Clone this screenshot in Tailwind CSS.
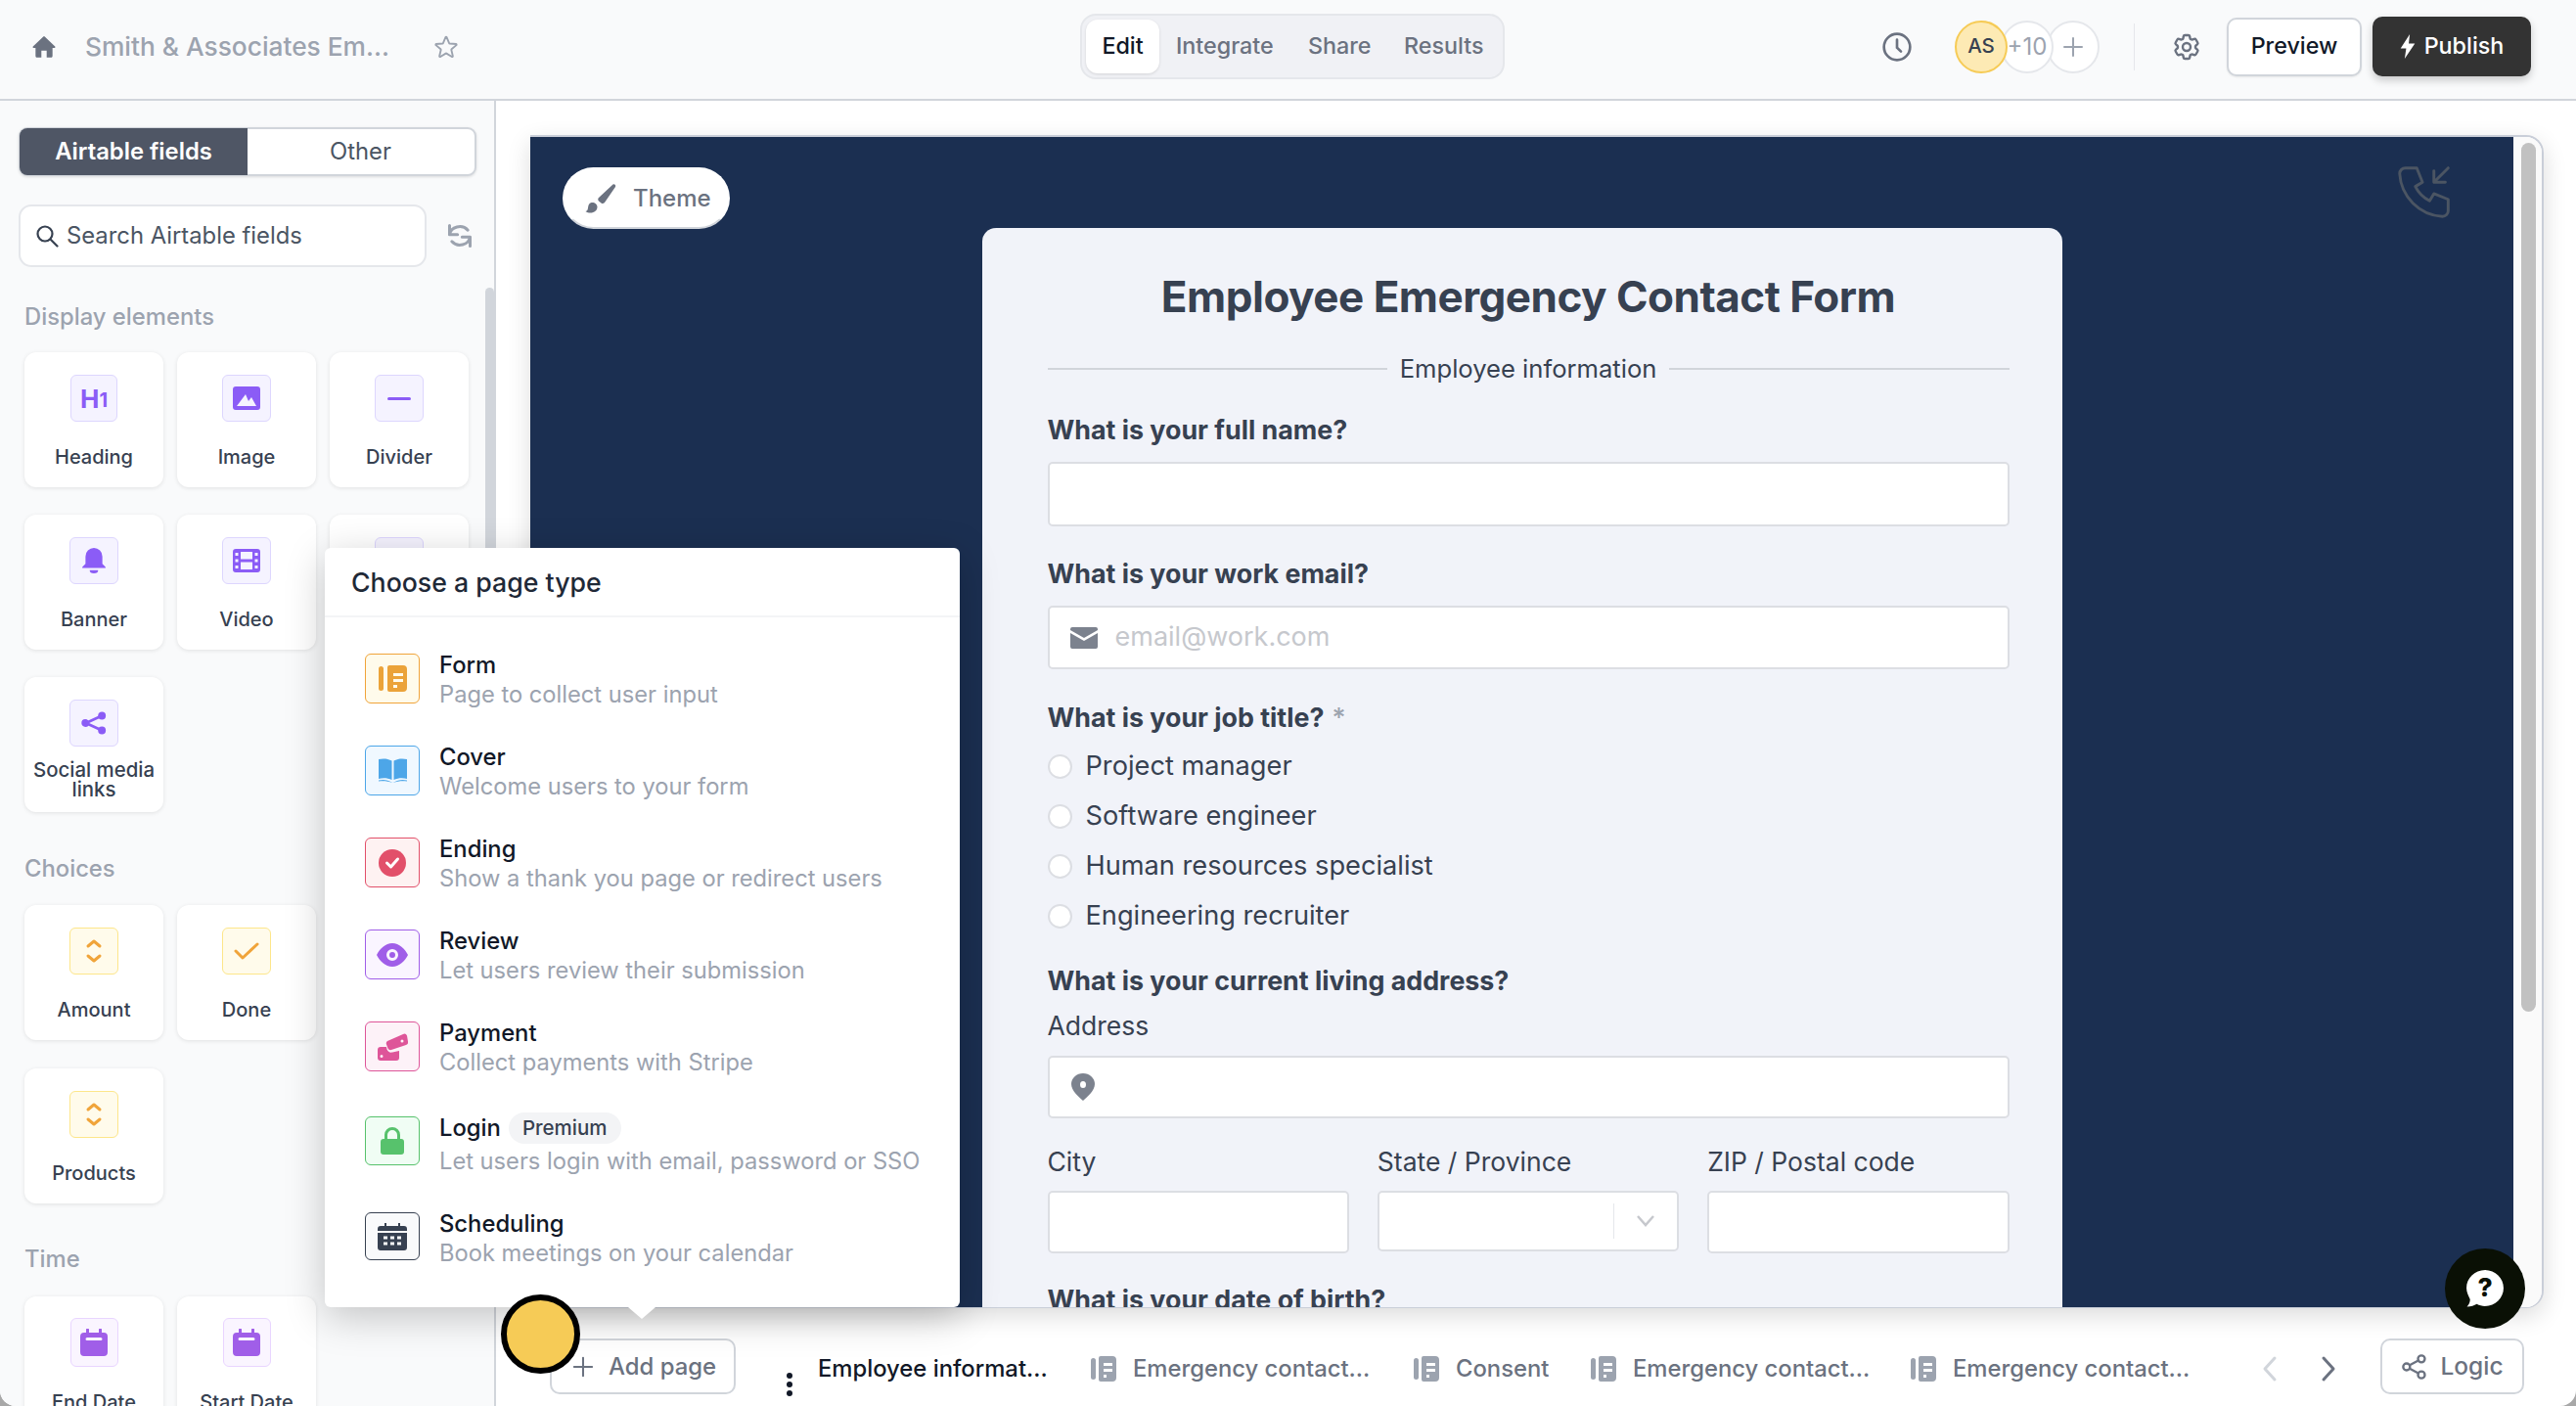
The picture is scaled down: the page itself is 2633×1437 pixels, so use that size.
<!DOCTYPE html>
<html lang="en">
<head>
  <meta charset="UTF-8" />
  <title>Form editor</title>
  <script src="https://cdn.jsdelivr.net/npm/@tailwindcss/browser@4"></script>
</head>
<body class="bg-[#a8a8a8] [font-family:Inter,sans-serif] overflow-hidden">
<div class="relative w-[2633px] h-[1437px] bg-white rounded-b-[16px] overflow-hidden flex flex-col">

  <!-- top bar -->
  <header class="h-[103px] shrink-0 bg-[#f9fafb] border-b-2 border-[#d1d5db] flex items-center pb-[6px]">
    <svg class="w-[26px] h-[26px] ml-[32px]" viewBox="0 0 24 24" fill="#6b7280"><path d="M12.7 2.3a1 1 0 0 0-1.4 0L1.6 11.6c-.5.5-.2 1.4.6 1.4H4v7.5c0 .8.7 1.5 1.5 1.5H9.500v-6.500h5V22h4c.8 0 1.500-.7 1.500-1.500V13h1.800c.8 0 1.100-.9.600-1.400z"/></svg>
    <span class="ml-[29px] w-[310px] text-[26.300px] font-medium text-[#9ca3af] whitespace-nowrap">Smith &amp; Associates Em...</span>
    <svg class="w-[28px] h-[28px] ml-[45px]" viewBox="0 0 24 24" fill="none" stroke="#9ca3af" stroke-width="1.600"><path stroke-linejoin="round" d="M11.480 3.499a.562.562 0 0 1 1.040 0l2.125 5.111a.563.563 0 0 0 .475.345l5.518.442c.499.04.701.663.321.988l-4.204 3.602a.563.563 0 0 0-.182.557l1.285 5.385a.562.562 0 0 1-.84.61l-4.725-2.885a.562.562 0 0 0-.586 0L6.982 20.540a.562.562 0 0 1-.84-.61l1.285-5.386a.562.562 0 0 0-.182-.557l-4.204-3.602a.562.562 0 0 1 .321-.988l5.518-.442a.563.563 0 0 0 .475-.345L11.480 3.500Z"/></svg>

    <div class="ml-[634px] w-[434px] h-[67px] bg-[#f0f1f5] border-2 border-[#e5e7eb] rounded-[16px] flex items-center pl-[4px] text-[23.300px] font-medium text-[#6b7280]">
      <span class="w-[75px] h-[55px] bg-white rounded-[12px] shadow-[0_1px_3px_rgba(0,0,0,.12)] flex items-center justify-center text-[#111827]">Edit</span>
      <span class="ml-[17px] w-[101px] whitespace-nowrap">Integrate</span>
      <span class="ml-[34px] w-[65px]">Share</span>
      <span class="ml-[33px] w-[82px]">Results</span>
    </div>

    <svg class="w-[32px] h-[32px] ml-[385px]" viewBox="0 0 24 24" fill="none" stroke="#6b7280" stroke-width="2" stroke-linecap="round"><circle cx="12" cy="12" r="10"/><path d="M12 6.500v6l3 3"/></svg>
    <div class="ml-[43px] flex items-center">
      <span class="relative z-30 w-[54px] h-[54px] rounded-full bg-[#fdeab4] border-2 border-[#f6cb56] flex items-center justify-center text-[20.500px] font-medium text-[#374151]">AS</span>
      <span class="relative z-20 -ml-[7px] w-[54px] h-[54px] rounded-full bg-white border-2 border-[#e5e7eb] flex items-center justify-center text-[24px] text-[#9ca3af]">+10</span>
      <span class="relative z-10 -ml-[7px] w-[54px] h-[54px] rounded-full bg-white border-2 border-[#e5e7eb] flex items-center justify-center">
        <svg class="w-[24px] h-[24px]" viewBox="0 0 24 24" fill="none" stroke="#9ca3af" stroke-width="2" stroke-linecap="round"><path d="M12 3v18M3 12h18"/></svg>
      </span>
    </div>
    <span class="ml-[35px] w-px h-[48px] bg-[#e5e7eb]"></span>
    <svg class="w-[32px] h-[32px] ml-[37px]" viewBox="0 0 24 24" fill="none" stroke="#6b7280" stroke-width="1.800"><path stroke-linejoin="round" d="M9.594 3.940c.09-.542.56-.94 1.110-.94h2.593c.55 0 1.020.398 1.110.94l.213 1.281c.063.374.313.686.645.87.074.04.147.083.22.127.325.196.72.257 1.075.124l1.217-.456a1.125 1.125 0 0 1 1.370.49l1.296 2.247a1.125 1.125 0 0 1-.26 1.431l-1.003.827c-.293.241-.438.613-.43.992a7.723 7.723 0 0 1 0 .255c-.008.378.137.75.43.991l1.004.827c.424.35.534.955.26 1.430l-1.298 2.247a1.125 1.125 0 0 1-1.369.491l-1.217-.456c-.355-.133-.75-.072-1.076.124a6.470 6.470 0 0 1-.22.128c-.331.183-.581.495-.644.869l-.213 1.281c-.09.543-.56.94-1.110.94h-2.594c-.55 0-1.019-.398-1.110-.94l-.213-1.281c-.062-.374-.312-.686-.644-.87a6.520 6.520 0 0 1-.22-.127c-.325-.196-.72-.257-1.076-.124l-1.217.456a1.125 1.125 0 0 1-1.369-.49l-1.297-2.247a1.125 1.125 0 0 1 .26-1.431l1.004-.827c.292-.24.437-.613.43-.991a6.932 6.932 0 0 1 0-.255c.007-.38-.138-.751-.43-.992l-1.004-.827a1.125 1.125 0 0 1-.26-1.430l1.297-2.247a1.125 1.125 0 0 1 1.370-.491l1.216.456c.356.133.751.072 1.076-.124.072-.044.146-.086.22-.128.332-.183.582-.495.644-.869l.214-1.280Z"/><circle cx="12" cy="12" r="3"/></svg>
    <button class="ml-[25px] w-[138px] h-[60px] bg-white border-2 border-[#d1d5db] rounded-[10px] shadow-[0_1px_2px_rgba(0,0,0,.08)] text-[23.300px] font-medium text-[#111827]">Preview</button>
    <button class="ml-[11px] w-[162px] h-[61px] bg-[#333333] rounded-[10px] shadow-[0_4px_8px_rgba(0,0,0,.2)] flex items-center justify-center gap-[9px] text-[23.300px] font-medium text-white">
      <svg class="w-[16px] h-[25px]" viewBox="0 0 14 24" fill="white"><path d="M9 0 0 14h5.500L4 24l10-15H8z"/></svg>Publish
    </button>
  </header>

  <div class="flex-1 flex min-h-0">
    <!-- fields sidebar -->
    <aside class="relative w-[507px] shrink-0 bg-[#f9fafb] border-r-2 border-[#d1d5db] overflow-hidden pt-[27px]">
      <div class="ml-[19px] w-[468px] h-[50px] flex border-2 border-[#d1d5db] rounded-[9px] bg-white shadow-[0_1px_3px_rgba(0,0,0,.12)] text-[23.800px]">
        <span class="w-[233px] -m-[1px] bg-[#4f5665] rounded-l-[8px] font-semibold text-white flex items-center justify-center">Airtable fields</span>
        <span class="flex-1 text-[#4b5563] flex items-center justify-center">Other</span>
      </div>
      <div class="mt-[29px] flex items-center">
        <div class="ml-[19px] w-[417px] h-[64px] bg-white border-2 border-[#e5e7eb] rounded-[13px] flex items-center pl-[15px] gap-[8px] text-[23.800px] text-[#4b5563]">
          <svg class="w-[24px] h-[24px]" viewBox="0 0 24 24" fill="none" stroke="#374151" stroke-width="2.200" stroke-linecap="round"><circle cx="10" cy="10" r="7.500"/><path d="m16 16 6.500 6.500"/></svg>
          Search Airtable fields
        </div>
        <svg class="w-[28px] h-[30px] ml-[20px]" viewBox="0 0 24 24" fill="none" stroke="#9ca3af" stroke-width="2.600" stroke-linecap="round" stroke-linejoin="round"><path d="M3 11a9 8 0 0 1 16-4M3 3v8h7M21 13a9 8 0 0 1-16 4M21 21v-8h-7"/></svg>
      </div>

      <h3 class="mt-[36px] ml-[25px] h-[30px] flex items-center text-[23.800px] font-medium text-[#9ca3af]">Display elements</h3>
      <div class="mt-[21px] ml-[25px] w-[454px] grid grid-cols-3 gap-x-[14px] gap-y-[28px]">
        <div class="h-[138px] bg-white rounded-[12px] shadow-[0_1px_4px_rgba(0,0,0,.1)] flex flex-col items-center pt-[23px]">
          <span class="w-[48px] h-[48px] rounded-[6px] bg-[#f5f3ff] border border-[#ddd6fe] flex items-center justify-center text-[26px] font-bold text-[#8b5cf6]">H<span class="text-[20px] mt-[3px]">1</span></span>
          <span class="mt-[21px] text-[20px] font-medium text-[#374151]">Heading</span>
        </div>
        <div class="h-[138px] bg-white rounded-[12px] shadow-[0_1px_4px_rgba(0,0,0,.1)] flex flex-col items-center pt-[23px]">
          <span class="w-[50px] h-[48px] rounded-[6px] bg-[#f5f3ff] border border-[#ddd6fe] flex items-center justify-center">
            <svg class="w-[28px] h-[24px]" viewBox="0 0 28 24" fill="#8b5cf6"><path d="M3 0h22a3 3 0 0 1 3 3v18a3 3 0 0 1-3 3H3a3 3 0 0 1-3-3V3a3 3 0 0 1 3-3zm1 20h20l-5-9-3 4-3-7z" fill-rule="evenodd"/></svg>
          </span>
          <span class="mt-[21px] text-[20px] font-medium text-[#374151]">Image</span>
        </div>
        <div class="h-[138px] bg-white rounded-[12px] shadow-[0_1px_4px_rgba(0,0,0,.1)] flex flex-col items-center pt-[23px]">
          <span class="w-[50px] h-[48px] rounded-[6px] bg-[#f5f3ff] border border-[#ddd6fe] flex items-center justify-center">
            <span class="w-[24px] h-[3px] rounded-full bg-[#8b5cf6]"></span>
          </span>
          <span class="mt-[21px] text-[20px] font-medium text-[#374151]">Divider</span>
        </div>
        <div class="h-[138px] bg-white rounded-[12px] shadow-[0_1px_4px_rgba(0,0,0,.1)] flex flex-col items-center pt-[23px]">
          <span class="w-[50px] h-[48px] rounded-[6px] bg-[#f5f3ff] border border-[#ddd6fe] flex items-center justify-center">
            <svg class="w-[26px] h-[28px]" viewBox="0 0 24 26" fill="#8b5cf6"><path d="M12 1a8 8 0 0 0-8 8v7l-3 3v1h22v-1l-3-3V9a8 8 0 0 0-8-8zM8 22h8a4 3 0 0 1-8 0z"/></svg>
          </span>
          <span class="mt-[21px] text-[20px] font-medium text-[#374151]">Banner</span>
        </div>
        <div class="h-[138px] bg-white rounded-[12px] shadow-[0_1px_4px_rgba(0,0,0,.1)] flex flex-col items-center pt-[23px]">
          <span class="w-[50px] h-[48px] rounded-[6px] bg-[#f5f3ff] border border-[#ddd6fe] flex items-center justify-center">
            <svg class="w-[28px] h-[24px]" viewBox="0 0 28 24" fill="#8b5cf6"><path fill-rule="evenodd" d="M3 0h22a3 3 0 0 1 3 3v18a3 3 0 0 1-3 3H3a3 3 0 0 1-3-3V3a3 3 0 0 1 3-3zm5 3v7.500h12V3zm0 10.500V21h12v-7.500zM2.500 4v3h3V4zm0 6.500v3h3v-3zm0 6.500v3h3v-3zm20-13v3h3V4zm0 6.500v3h3v-3zm0 6.500v3h3v-3z"/></svg>
          </span>
          <span class="mt-[21px] text-[20px] font-medium text-[#374151]">Video</span>
        </div>
        <div class="h-[138px] bg-white rounded-[12px] shadow-[0_1px_4px_rgba(0,0,0,.1)] flex flex-col items-center pt-[23px]">
          <span class="w-[50px] h-[48px] rounded-[6px] bg-[#f5f3ff] border border-[#ddd6fe]"></span>
        </div>
        <div class="h-[138px] bg-white rounded-[12px] shadow-[0_1px_4px_rgba(0,0,0,.1)] flex flex-col items-center pt-[23px]">
          <span class="w-[50px] h-[48px] rounded-[6px] bg-[#f5f3ff] border border-[#ddd6fe] flex items-center justify-center">
            <svg class="w-[28px] h-[28px]" viewBox="0 0 24 24" fill="#8b5cf6" stroke="#8b5cf6" stroke-width="2.400"><circle cx="4.500" cy="12" r="2.200"/><circle cx="19" cy="5.500" r="2.200"/><circle cx="19" cy="18.500" r="2.200"/><path d="m5 12 14-6.500M5 12l14 6.500" fill="none"/></svg>
          </span>
          <span class="mt-[14px] text-[20.400px] leading-[20px] font-medium text-[#374151] text-center">Social media<br>links</span>
        </div>
      </div>

      <h3 class="mt-[43px] ml-[25px] h-[30px] flex items-center text-[23.800px] font-medium text-[#9ca3af]">Choices</h3>
      <div class="mt-[22px] ml-[25px] w-[454px] grid grid-cols-3 gap-x-[14px] gap-y-[29px]">
        <div class="h-[138px] bg-white rounded-[12px] shadow-[0_1px_4px_rgba(0,0,0,.1)] flex flex-col items-center pt-[23px]">
          <span class="w-[50px] h-[48px] rounded-[6px] bg-[#fffbeb] border border-[#fde68a] flex items-center justify-center">
            <svg class="w-[18px] h-[28px]" viewBox="0 0 18 28" fill="none" stroke="#f0a43a" stroke-width="3" stroke-linecap="round" stroke-linejoin="round"><path d="m3 9 6-5 6 5M3 19l6 5 6-5"/></svg>
          </span>
          <span class="mt-[21px] text-[20px] font-medium text-[#374151]">Amount</span>
        </div>
        <div class="h-[138px] bg-white rounded-[12px] shadow-[0_1px_4px_rgba(0,0,0,.1)] flex flex-col items-center pt-[23px]">
          <span class="w-[50px] h-[48px] rounded-[6px] bg-[#fffbeb] border border-[#fde68a] flex items-center justify-center">
            <svg class="w-[26px] h-[20px]" viewBox="0 0 26 20" fill="none" stroke="#f0a43a" stroke-width="3" stroke-linecap="round" stroke-linejoin="round"><path d="m2 10 7 7L24 3"/></svg>
          </span>
          <span class="mt-[21px] text-[20px] font-medium text-[#374151]">Done</span>
        </div>
        <div></div>
        <div class="h-[138px] bg-white rounded-[12px] shadow-[0_1px_4px_rgba(0,0,0,.1)] flex flex-col items-center pt-[23px]">
          <span class="w-[50px] h-[48px] rounded-[6px] bg-[#fffbeb] border border-[#fde68a] flex items-center justify-center">
            <svg class="w-[18px] h-[28px]" viewBox="0 0 18 28" fill="none" stroke="#f0a43a" stroke-width="3" stroke-linecap="round" stroke-linejoin="round"><path d="m3 9 6-5 6 5M3 19l6 5 6-5"/></svg>
          </span>
          <span class="mt-[21px] text-[20px] font-medium text-[#374151]">Products</span>
        </div>
      </div>

      <h3 class="mt-[42px] ml-[25px] h-[30px] flex items-center text-[23.800px] font-medium text-[#9ca3af]">Time</h3>
      <div class="mt-[23px] ml-[25px] w-[454px] grid grid-cols-3 gap-x-[14px]">
        <div class="h-[138px] bg-white rounded-[12px] shadow-[0_1px_4px_rgba(0,0,0,.1)] flex flex-col items-center pt-[22px]">
          <span class="w-[49px] h-[50px] rounded-[6px] bg-[#faf5ff] border border-[#e9d5ff] flex items-center justify-center">
            <svg class="w-[28px] h-[28px]" viewBox="0 0 28 28" fill="#a05ee8"><path fill-rule="evenodd" d="M6 1a1.500 1.500 0 0 1 3 0v3h10V1a1.500 1.500 0 0 1 3 0v3h2a4 4 0 0 1 4 4v16a4 4 0 0 1-4 4H4a4 4 0 0 1-4-4V8a4 4 0 0 1 4-4h2zm1 8a1.500 1.500 0 0 0 0 3h14a1.500 1.500 0 0 0 0-3z"/></svg>
          </span>
          <span class="mt-[21px] text-[20px] font-medium text-[#374151]">End Date</span>
        </div>
        <div class="h-[138px] bg-white rounded-[12px] shadow-[0_1px_4px_rgba(0,0,0,.1)] flex flex-col items-center pt-[22px]">
          <span class="w-[49px] h-[50px] rounded-[6px] bg-[#faf5ff] border border-[#e9d5ff] flex items-center justify-center">
            <svg class="w-[28px] h-[28px]" viewBox="0 0 28 28" fill="#a05ee8"><path fill-rule="evenodd" d="M6 1a1.500 1.500 0 0 1 3 0v3h10V1a1.500 1.500 0 0 1 3 0v3h2a4 4 0 0 1 4 4v16a4 4 0 0 1-4 4H4a4 4 0 0 1-4-4V8a4 4 0 0 1 4-4h2zm1 8a1.500 1.500 0 0 0 0 3h14a1.500 1.500 0 0 0 0-3z"/></svg>
          </span>
          <span class="mt-[21px] text-[20px] font-medium text-[#374151] whitespace-nowrap">Start Date</span>
        </div>
      </div>

      <span class="absolute right-0 top-[191px] w-[9px] h-[500px] rounded-full bg-[#d1d5db]"></span>
    </aside>

    <!-- canvas + pages bar -->
    <main class="flex-1 min-w-0 flex flex-col">
      <div class="mt-[35px] ml-[35px] w-[2058px] h-[1199px] shrink-0 flex border-t-2 border-r-2 border-[#c9ced8] rounded-tr-[18px] rounded-br-[18px] border-b border-b-[#c9ced8] overflow-hidden bg-white shadow-[0_8px_24px_rgba(0,0,0,.14)]">
        <div class="relative flex-1 bg-[#1b2f51] flex justify-center overflow-hidden">
          <span class="absolute left-[33px] top-[31px] w-[171px] h-[63px] bg-white rounded-full border-2 border-white border-b-[#d1d5db] flex items-center pl-[21px] gap-[17px] text-[24px] font-medium text-[#6b7280]">
            <svg class="w-[32px] h-[32px]" viewBox="0 0 32 32" fill="#6b7280"><path d="M28.500 1.500c1.500-1 3.500.8 2.500 2.500L20 20c-1 1.200-2.500 1.500-3.500.5l-2.500-2c-1-1-1-2.500 0-3.500z"/><path d="M6.500 20c3-.5 6 1.500 6 4.500 0 3.500-3 6-7 6-2 0-3.500-.3-5-1.500 2-.5 2.300-2 2.500-3.500.2-2.500 1-5 3.500-5.500z"/></svg>
            Theme
          </span>
          <svg class="absolute right-[55px] top-[20px] w-[70px] h-[70px]" viewBox="0 0 24 24" fill="none" stroke="#4b5563" stroke-width="1" stroke-linecap="round" stroke-linejoin="round"><path d="M5 4h4l2 5-2.500 1.500a11 11 0 0 0 5 5l1.500-2.500 5 2v4a2 2 0 0 1-2 2A16 16 0 0 1 3 6a2 2 0 0 1 2-2M15 9l5-5M15 5v4h4"/></svg>

          <form class="mt-[93px] w-[1104px] h-[1200px] shrink-0 bg-[#f1f3f9] rounded-t-[14px] pt-[35px] pl-[67px] pr-[54px] text-[#374151]">
            <h1 class="h-[70px] flex items-center justify-center text-[44px] font-bold tracking-[-0.5px]">Employee Emergency Contact Form</h1>
            <div class="mt-[22px] h-[34px] flex items-center gap-[13px] text-[25.600px]">
              <span class="flex-1 h-[2px] bg-[#d1d5db]"></span>Employee information<span class="flex-1 h-[2px] bg-[#d1d5db]"></span>
            </div>
            <label class="mt-[27px] h-[36px] flex items-center text-[26.800px] font-bold">What is your full name?</label>
            <div class="mt-[15px] h-[66px] bg-white border-2 border-[#dcdee3] rounded-[5px]"></div>
            <label class="mt-[30px] h-[36px] flex items-center text-[26.800px] font-bold">What is your work email?</label>
            <div class="mt-[15px] h-[65px] bg-white border-2 border-[#dcdee3] rounded-[5px] flex items-center pl-[21px] gap-[18px] text-[27px] text-[#c6c8cd]">
              <svg class="w-[28px] h-[22px]" viewBox="0 0 28 22" fill="#7c828e"><path d="M2 0h24a2 2 0 0 1 2 2v1L14 11 0 3V2a2 2 0 0 1 2-2zM0 6l14 8 14-8v14a2 2 0 0 1-2 2H2a2 2 0 0 1-2-2z"/></svg>
              email@work.com
            </div>
            <label class="mt-[31px] h-[36px] flex items-center text-[26.800px] font-bold">What is your job title?<span class="ml-[8px] text-[#9ca3af] font-medium">*</span></label>
            <div class="mt-[14px] flex flex-col gap-[15px] text-[27.200px]">
              <div class="h-[36px] flex items-center gap-[14px]"><span class="w-[25px] h-[25px] rounded-full bg-white border-2 border-[#dcdee3]"></span>Project manager</div>
              <div class="h-[36px] flex items-center gap-[14px]"><span class="w-[25px] h-[25px] rounded-full bg-white border-2 border-[#dcdee3]"></span>Software engineer</div>
              <div class="h-[36px] flex items-center gap-[14px]"><span class="w-[25px] h-[25px] rounded-full bg-white border-2 border-[#dcdee3]"></span>Human resources specialist</div>
              <div class="h-[36px] flex items-center gap-[14px]"><span class="w-[25px] h-[25px] rounded-full bg-white border-2 border-[#dcdee3]"></span>Engineering recruiter</div>
            </div>
            <label class="mt-[30px] h-[36px] flex items-center text-[26.800px] font-bold">What is your current living address?</label>
            <label class="mt-[11px] h-[36px] flex items-center text-[26.500px]">Address</label>
            <div class="mt-[12px] h-[64px] bg-white border-2 border-[#dcdee3] rounded-[5px] flex items-center pl-[22px]">
              <svg class="w-[24px] h-[28px]" viewBox="0 0 24 28" fill="#7c828e"><path fill-rule="evenodd" d="M12 0a12 11 0 0 1 12 11c0 7-8 13-12 17C8 24 0 18 0 11A12 11 0 0 1 12 0zm0 8a3 3.500 0 1 0 0 7 3 3.500 0 0 0 0-7z"/></svg>
            </div>
            <div class="mt-[27px] grid grid-cols-3 gap-x-[29px] text-[26.500px]">
              <div>
                <div class="h-[36px] flex items-center">City</div>
                <div class="mt-[11px] h-[64px] bg-white border-2 border-[#dcdee3] rounded-[5px]"></div>
              </div>
              <div>
                <div class="h-[36px] flex items-center">State / Province</div>
                <div class="mt-[11px] h-[62px] bg-white border-2 border-[#dcdee3] rounded-[5px] flex items-center justify-end">
                  <span class="w-px h-[36px] bg-[#e5e7eb]"></span>
                  <svg class="w-[20px] h-[14px] mx-[22px]" viewBox="0 0 20 14" fill="none" stroke="#c6c8cd" stroke-width="2.500"><path d="m2 2 8 9 8-9"/></svg>
                </div>
              </div>
              <div>
                <div class="h-[36px] flex items-center">ZIP / Postal code</div>
                <div class="mt-[11px] h-[64px] bg-white border-2 border-[#dcdee3] rounded-[5px]"></div>
              </div>
            </div>
            <label class="mt-[29px] h-[36px] flex items-center text-[26.800px] font-bold">What is your date of birth?</label>
          </form>
        </div>
        <div class="relative w-[29px] shrink-0 bg-[#fafafa]">
          <span class="absolute left-[8px] top-[6px] w-[15px] h-[888px] rounded-full bg-[#c1c1c1]"></span>
        </div>
      </div>

      <!-- pages bar -->
      <div class="flex-1 flex items-start pt-[31px] pl-[55px] pr-[53px]">
        <button class="w-[190px] h-[57px] shrink-0 bg-white border-2 border-[#d1d5db] rounded-[10px] flex items-center pl-[21px] gap-[15px] text-[23.900px] font-medium text-[#6b7280]">
          <svg class="w-[22px] h-[22px]" viewBox="0 0 24 24" fill="none" stroke="#6b7280" stroke-width="2.200" stroke-linecap="round"><path d="M12 2v20M2 12h20"/></svg>
          Add page
        </button>
        <svg class="ml-[51px] mt-[35px] w-[8px] h-[24px] shrink-0" viewBox="0 0 8 24" fill="#111827"><circle cx="4" cy="3" r="3"/><circle cx="4" cy="12" r="3"/><circle cx="4" cy="21" r="3"/></svg>
        <span class="ml-[25px] mt-[13px] w-[236px] shrink-0 text-[23.800px] font-medium text-[#111827] whitespace-nowrap">Employee informat...</span>
        <span class="ml-[43px] mt-[13px] w-[286px] shrink-0 flex items-center gap-[17px] text-[23.800px] font-medium text-[#6b7280] whitespace-nowrap">
          <svg class="w-[26px] h-[26px] shrink-0" viewBox="0 0 26 26" fill="#9ca3af"><rect x="0" y="2" width="5" height="22" rx="2.500"/><path fill-rule="evenodd" d="M10 0h12a4 4 0 0 1 4 4v18a4 4 0 0 1-4 4H10a2 2 0 0 1-2-2V2a2 2 0 0 1 2-2zm3 7v3h9V7zm0 6v3h9v-3zm0 6v3h3v-3z"/></svg>
          Emergency contact...
        </span>
        <span class="ml-[44px] mt-[13px] w-[137px] shrink-0 flex items-center gap-[17px] text-[23.800px] font-medium text-[#6b7280] whitespace-nowrap">
          <svg class="w-[26px] h-[26px] shrink-0" viewBox="0 0 26 26" fill="#9ca3af"><rect x="0" y="2" width="5" height="22" rx="2.500"/><path fill-rule="evenodd" d="M10 0h12a4 4 0 0 1 4 4v18a4 4 0 0 1-4 4H10a2 2 0 0 1-2-2V2a2 2 0 0 1 2-2zm3 7v3h9V7zm0 6v3h9v-3zm0 6v3h3v-3z"/></svg>
          Consent
        </span>
        <span class="ml-[44px] mt-[13px] w-[286px] shrink-0 flex items-center gap-[17px] text-[23.800px] font-medium text-[#6b7280] whitespace-nowrap">
          <svg class="w-[26px] h-[26px] shrink-0" viewBox="0 0 26 26" fill="#9ca3af"><rect x="0" y="2" width="5" height="22" rx="2.500"/><path fill-rule="evenodd" d="M10 0h12a4 4 0 0 1 4 4v18a4 4 0 0 1-4 4H10a2 2 0 0 1-2-2V2a2 2 0 0 1 2-2zm3 7v3h9V7zm0 6v3h9v-3zm0 6v3h3v-3z"/></svg>
          Emergency contact...
        </span>
        <span class="ml-[41px] mt-[13px] w-[286px] shrink-0 flex items-center gap-[17px] text-[23.800px] font-medium text-[#6b7280] whitespace-nowrap">
          <svg class="w-[26px] h-[26px] shrink-0" viewBox="0 0 26 26" fill="#9ca3af"><rect x="0" y="2" width="5" height="22" rx="2.500"/><path fill-rule="evenodd" d="M10 0h12a4 4 0 0 1 4 4v18a4 4 0 0 1-4 4H10a2 2 0 0 1-2-2V2a2 2 0 0 1 2-2zm3 7v3h9V7zm0 6v3h9v-3zm0 6v3h3v-3z"/></svg>
          Emergency contact...
        </span>
        <svg class="ml-auto mt-[17px] w-[18px] h-[28px] shrink-0" viewBox="0 0 18 28" fill="none" stroke="#d1d5db" stroke-width="3" stroke-linecap="round" stroke-linejoin="round"><path d="M14 3 4 14l10 11"/></svg>
        <svg class="ml-[42px] mt-[17px] w-[18px] h-[28px] shrink-0" viewBox="0 0 18 28" fill="none" stroke="#6b7280" stroke-width="3" stroke-linecap="round" stroke-linejoin="round"><path d="m4 3 10 11L4 25"/></svg>
        <button class="ml-[44px] w-[147px] h-[57px] shrink-0 bg-white border-2 border-[#d1d5db] rounded-[10px] flex items-center justify-center gap-[12px] text-[24.500px] font-medium text-[#6b7280]">
          <svg class="w-[28px] h-[28px]" viewBox="0 0 24 24" fill="none" stroke="#6b7280" stroke-width="2"><circle cx="5" cy="12" r="3"/><circle cx="18" cy="5" r="3"/><circle cx="18" cy="19" r="3"/><path d="m7.700 10.500 7.600-4M7.700 13.500l7.600 4"/></svg>
          Logic
        </button>
      </div>
    </main>
  </div>

  <!-- page type popover -->
  <div class="absolute left-[332px] top-[560px] w-[649px] h-[776px] bg-white rounded-[6px] shadow-[0_10px_40px_rgba(0,0,0,.22)] z-40">
    <div class="h-[71px] border-b-2 border-[#f3f4f6] flex items-center pl-[27px] pt-[2px] text-[26.700px] font-medium text-[#1f2937]">Choose a page type</div>
    <ul class="pt-[37px] pl-[41px]">
      <li class="h-[94px] flex gap-[20px]">
        <span class="w-[56px] h-[51px] shrink-0 rounded-[6px] bg-[#fffbeb] border border-[#f0a43a] flex items-center justify-center">
          <svg class="w-[29px] h-[27px]" viewBox="0 0 29 27" fill="#eba339"><rect x="0" y="1" width="5" height="25" rx="2.500"/><path fill-rule="evenodd" d="M11 0h14a4 4 0 0 1 4 4v19a4 4 0 0 1-4 4H11a2 2 0 0 1-2-2V2a2 2 0 0 1 2-2zm4 8v3h10V8zm0 6v3h10v-3zm0 6v3h4v-3z"/></svg>
        </span>
        <div class="-mt-[3px]"><p class="h-[30px] flex items-center text-[23.800px] font-medium text-[#111827]">Form</p><p class="h-[30px] flex items-center text-[23.700px] text-[#9ca3af]">Page to collect user input</p></div>
      </li>
      <li class="h-[94px] flex gap-[20px]">
        <span class="w-[56px] h-[51px] shrink-0 rounded-[6px] bg-[#f0f8ff] border border-[#4da6e8] flex items-center justify-center">
          <svg class="w-[29px] h-[25px]" viewBox="0 0 29 25" fill="#4da6e8"><path d="M0 1c4-1 9-1 13.500 1.500V22C9 20 4 20 0 21zM29 1c-4-1-9-1-13.500 1.500V22C20 20 25 20 29 21zM0 22.500c4-1 9-1 14.500 2.500 5.500-3.500 10.500-3.500 14.500-2.500v1c-4-.5-9-.5-14.500 1.500C9 23 4 23 0 23.500z"/></svg>
        </span>
        <div class="-mt-[3px]"><p class="h-[30px] flex items-center text-[23.800px] font-medium text-[#111827]">Cover</p><p class="h-[30px] flex items-center text-[23.700px] text-[#9ca3af]">Welcome users to your form</p></div>
      </li>
      <li class="h-[94px] flex gap-[20px]">
        <span class="w-[56px] h-[51px] shrink-0 rounded-[6px] bg-[#fef2f2] border border-[#e2506a] flex items-center justify-center">
          <svg class="w-[28px] h-[28px]" viewBox="0 0 28 28"><circle cx="14" cy="14" r="14" fill="#e2506a"/><path d="m8.500 14 4 4 7-8" fill="none" stroke="white" stroke-width="3" stroke-linecap="round" stroke-linejoin="round"/></svg>
        </span>
        <div class="-mt-[3px]"><p class="h-[30px] flex items-center text-[23.800px] font-medium text-[#111827]">Ending</p><p class="h-[30px] flex items-center text-[23.700px] text-[#9ca3af] whitespace-nowrap">Show a thank you page or redirect users</p></div>
      </li>
      <li class="h-[94px] flex gap-[20px]">
        <span class="w-[56px] h-[51px] shrink-0 rounded-[6px] bg-[#faf5ff] border border-[#a05ee8] flex items-center justify-center">
          <svg class="w-[32px] h-[24px]" viewBox="0 0 32 24"><path fill="#a05ee8" fill-rule="evenodd" d="M16 0c7 0 13 6 16 12-3 6-9 12-16 12S3 18 0 12C3 6 9 0 16 0zm0 6a6 6 0 1 0 0 12 6 6 0 0 0 0-12zm0 3a3 3 0 1 1 0 6 3 3 0 0 1 0-6z"/></svg>
        </span>
        <div class="-mt-[3px]"><p class="h-[30px] flex items-center text-[23.800px] font-medium text-[#111827]">Review</p><p class="h-[30px] flex items-center text-[23.700px] text-[#9ca3af]">Let users review their submission</p></div>
      </li>
      <li class="h-[97px] flex gap-[20px]">
        <span class="w-[56px] h-[51px] shrink-0 rounded-[6px] bg-[#fdf2f8] border border-[#de5599] flex items-center justify-center">
          <svg class="w-[31px] h-[28px]" viewBox="0 0 31 28" fill="#de5599"><path fill-rule="evenodd" d="M10 8 26 1a3 3 0 0 1 4 1.500l1 6a3 3 0 0 1-2 3.500L14 17a3 3 0 0 1-3.500-1.500L9 11.500A3 3 0 0 1 10 8zm15-1.500a1.500 1.500 0 1 0 0 3 1.500 1.500 0 0 0 0-3z"/><path fill-rule="evenodd" d="M3 14h6l.5 2.500c1 2.500 3 3.500 5.500 3L22 18v7a3 3 0 0 1-3 3H3a3 3 0 0 1-3-3V17a3 3 0 0 1 3-3zm1 8a1.500 1.500 0 1 0 0 3 1.500 1.500 0 0 0 0-3z"/></svg>
        </span>
        <div class="-mt-[3px]"><p class="h-[30px] flex items-center text-[23.800px] font-medium text-[#111827]">Payment</p><p class="h-[30px] flex items-center text-[23.700px] text-[#9ca3af]">Collect payments with Stripe</p></div>
      </li>
      <li class="h-[98px] flex gap-[20px]">
        <span class="w-[56px] h-[50px] shrink-0 rounded-[6px] bg-[#f0fdf4] border border-[#57c26c] flex items-center justify-center">
          <svg class="w-[24px] h-[28px]" viewBox="0 0 24 28" fill="#57c26c"><path fill-rule="evenodd" d="M12 0a8 8 0 0 1 8 8v4h1a3 3 0 0 1 3 3v10a3 3 0 0 1-3 3H3a3 3 0 0 1-3-3V15a3 3 0 0 1 3-3h1V8a8 8 0 0 1 8-8zm0 3a5 5 0 0 0-5 5v4h10V8a5 5 0 0 0-5-5z"/></svg>
        </span>
        <div class="-mt-[3px]"><p class="h-[30px] flex items-center gap-[8px] text-[23.800px] font-medium text-[#111827]">Login<span class="h-[32px] px-[14px] rounded-full bg-[#f3f4f6] flex items-center text-[20.500px] font-medium text-[#374151]">Premium</span></p><p class="h-[30px] mt-[4px] flex items-center text-[23.700px] text-[#9ca3af] whitespace-nowrap">Let users login with email, password or SSO</p></div>
      </li>
      <li class="h-[94px] flex gap-[20px]">
        <span class="w-[56px] h-[49px] shrink-0 rounded-[6px] bg-[#f9fafb] border border-[#374151] flex items-center justify-center">
          <svg class="w-[30px] h-[28px]" viewBox="0 0 30 28" fill="#374151"><path fill-rule="evenodd" d="M7 0h2v3h12V0h2v3h4a3 3 0 0 1 3 3v2H0V6a3 3 0 0 1 3-3h4zM0 10h30v15a3 3 0 0 1-3 3H3a3 3 0 0 1-3-3zm6 3.500v3h4v-3zm7 0v3h4v-3zm7 0v3h4v-3zm-14 6v3h4v-3zm7 0v3h4v-3zm7 0v3h4v-3z"/></svg>
        </span>
        <div class="-mt-[3px]"><p class="h-[30px] flex items-center text-[23.800px] font-medium text-[#111827]">Scheduling</p><p class="h-[30px] flex items-center text-[23.700px] text-[#9ca3af]">Book meetings on your calendar</p></div>
      </li>
    </ul>
    <span class="absolute left-[310px] -bottom-[12px] w-0 h-0 border-x-[14px] border-x-transparent border-t-[12px] border-t-white"></span>
  </div>

  <!-- step marker -->
  <span class="absolute left-[512px] top-[1323px] w-[81px] h-[81px] rounded-full bg-[#f6cb56] border-[6px] border-black z-50"></span>

  <!-- help bubble -->
  <span class="absolute left-[2499px] top-[1276px] w-[82px] h-[82px] rounded-full bg-[#0a1005] flex items-center justify-center z-50">
    <svg class="w-[40px] h-[40px]" viewBox="0 0 38 38"><path fill="white" d="M19 1c10 0 18 8 18 17.500S29 36 19 36c-3 0-5.500-.6-8-2-2.500 1.500-5.500 2.500-9.500 2.500 2-2 3-4.500 3-7C3 26 1 22.500 1 18.500 1 9 9 1 19 1z"/><text x="19" y="27" text-anchor="middle" font-family="Inter" font-size="25" font-weight="800" fill="#0a1005">?</text></svg>
  </span>
</div>
</body>
</html>
